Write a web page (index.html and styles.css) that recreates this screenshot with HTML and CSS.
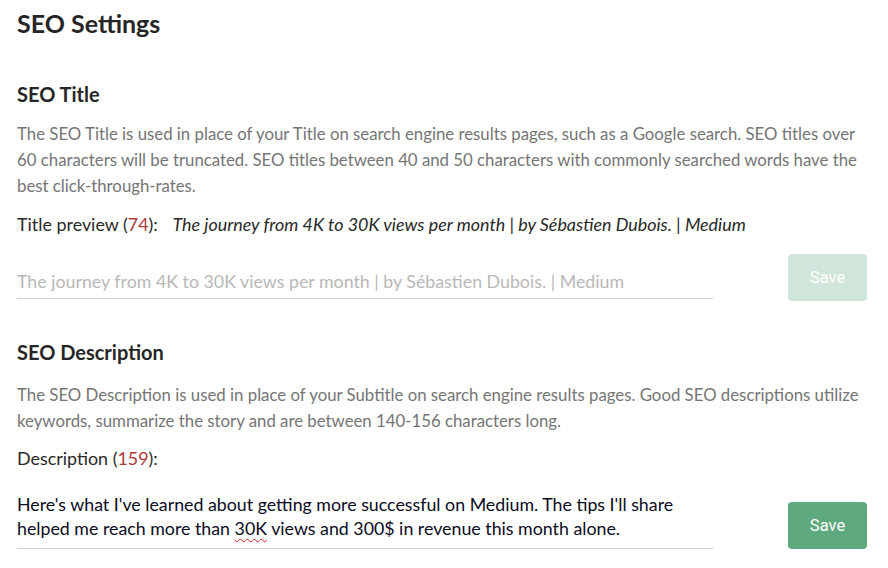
FILE: index.html
```html
<!DOCTYPE html>
<html>
<head>
<meta charset="utf-8">
<link rel="stylesheet" href="styles.css">
</head>
<body>
<div class="page">
  <h1 class="page-title">SEO Settings</h1>

  <section class="section">
    <h2 class="section-title">SEO Title</h2>
    <p class="help">The SEO Title is used in place of your Title on search engine results pages, such as a Google search. SEO titles over 60 characters will be truncated. SEO titles between 40 and 50 characters with commonly searched words have the best click-through-rates.</p>
    <div class="preview">Title preview (<span class="count">74</span>): <em class="preview-text">The journey from 4K to 30K views per month | by Sébastien Dubois. | Medium</em></div>
    <div class="field-row">
      <div class="field placeholder">The journey from 4K to 30K views per month | by Sébastien Dubois. | Medium</div>
      <button class="btn btn-disabled">Save</button>
    </div>
  </section>

  <section class="section section-desc">
    <h2 class="section-title">SEO Description</h2>
    <p class="help help-desc">The SEO Description is used in place of your Subtitle on search engine results pages. Good SEO descriptions utilize keywords, summarize the story and are between 140-156 characters long.</p>
    <div class="preview preview-desc">Description (<span class="count">159</span>):</div>
    <div class="field-row field-row-desc">
      <div class="field field-text">Here's what I've learned about getting more successful on Medium. The tips I'll share helped me reach more than <span class="misspelled">30K</span> views and 300$ in revenue this month alone.</div>
      <button class="btn btn-active">Save</button>
    </div>
  </section>
</div>
</body>
</html>
```

FILE: styles.css
```css
html, body {
  margin: 0;
  padding: 0;
  background: #ffffff;
}
.page {
  padding: 6px 21px 0 17px;
  font-family: "Lato", "Liberation Sans", sans-serif;
  color: #292929;
}
.page-title {
  margin: 0;
  font-size: 25px;
  font-weight: 700;
  line-height: 34px;
  color: #262626;
}
.section {
  margin-top: 41px;
}
.section-desc {
  margin-top: 40px;
}
.section-title {
  margin: 0;
  font-size: 20px;
  font-weight: 700;
  line-height: 26px;
  color: #262626;
}
.help {
  margin: 14px 0 0;
  font-size: 16.8px;
  line-height: 26px;
  color: #757575;
}
.help-desc {
  margin-top: 17px;
}
.preview {
  margin-top: 12px;
  font-size: 17.9px;
  line-height: 26px;
  color: #292929;
}
.preview-desc {
  margin-top: 11px;
}
.count {
  color: #b03a3a;
}
.preview-text {
  margin-left: 10px;
  font-style: italic;
}
.field-row {
  display: flex;
  align-items: flex-end;
  justify-content: space-between;
  margin-top: 17px;
}
.field-row-desc {
  margin-top: 21px;
}
.field {
  width: 696px;
  border-bottom: 1px solid #cfcfcf;
  font-size: 17.8px;
}
.placeholder {
  color: #b8b8b8;
  line-height: 26px;
  padding-bottom: 4px;
}
.field-text {
  color: #0b0b1e;
  line-height: 24px;
  padding-bottom: 8px;
}
.misspelled {
  text-decoration: underline wavy #e02020;
  text-decoration-thickness: 1px;
  text-underline-offset: 3px;
}
.btn {
  width: 79px;
  height: 47px;
  border: none;
  border-radius: 4px;
  color: #ffffff;
  font-family: "Roboto", "Liberation Sans", sans-serif;
  font-size: 16.5px;
  padding: 0;
  margin-bottom: -2px;
}
.btn-disabled {
  background: #d0e6da;
}
.btn-active {
  background: #5ea97e;
  margin-bottom: 0;
}
```
